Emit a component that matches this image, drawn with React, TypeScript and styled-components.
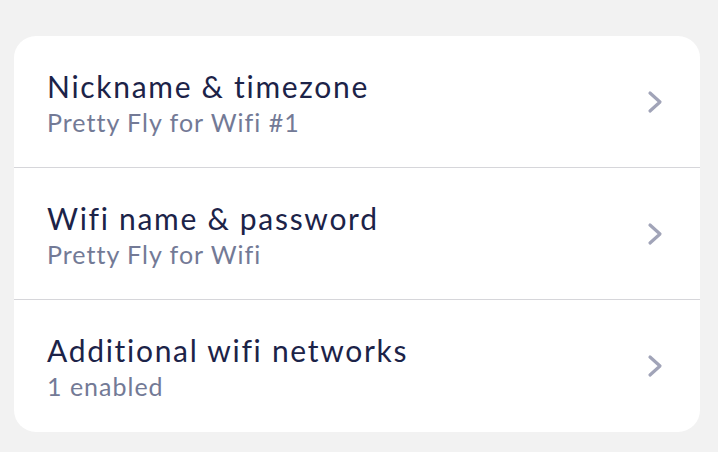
import React from 'react';
import styled, { createGlobalStyle } from 'styled-components';

const GlobalStyle = createGlobalStyle`
  html, body {
    margin: 0;
    padding: 0;
    background: #f2f2f2;
  }
  body {
    font-family: Lato, "Noto Sans", sans-serif;
  }
`;

const Page = styled.div`
  padding: 36px 18px 20px 14px;
`;

const Card = styled.div`
  background: #ffffff;
  border-radius: 22px;
  overflow: hidden;
`;

const Row = styled.div<{ $height: number }>`
  display: flex;
  align-items: center;
  height: ${(p) => p.$height}px;
  padding: 0 37px 0 33px;
  box-sizing: border-box;
  & + & {
    border-top: 1px solid #d6d6da;
  }
`;

const Text = styled.div`
  flex: 1;
  display: flex;
  flex-direction: column;
`;

const Title = styled.div`
  font-size: 30px;
  line-height: 40px;
  color: #1c2348;
  letter-spacing: 1.7px;
`;

const Subtitle = styled.div`
  font-size: 25px;
  line-height: 32px;
  color: #737a96;
  letter-spacing: 1px;
`;

const Chevron = () => (
  <svg width="16" height="24" viewBox="0 0 16 24" fill="none">
    <path
      d="M3 3 L13 12 L3 21"
      stroke="#a1a4b8"
      strokeWidth="3.2"
      strokeLinecap="round"
      strokeLinejoin="round"
    />
  </svg>
);

const items = [
  { title: 'Nickname & timezone', sub: 'Pretty Fly for Wifi #1', h: 131 },
  { title: 'Wifi name & password', sub: 'Pretty Fly for Wifi', h: 132 },
  { title: 'Additional wifi networks', sub: '1 enabled', h: 133 },
];

export default function App() {
  return (
    <>
      <GlobalStyle />
      <Page>
        <Card>
          {items.map((it) => (
            <Row key={it.title} $height={it.h}>
              <Text>
                <Title>{it.title}</Title>
                <Subtitle>{it.sub}</Subtitle>
              </Text>
              <Chevron />
            </Row>
          ))}
        </Card>
      </Page>
    </>
  );
}
